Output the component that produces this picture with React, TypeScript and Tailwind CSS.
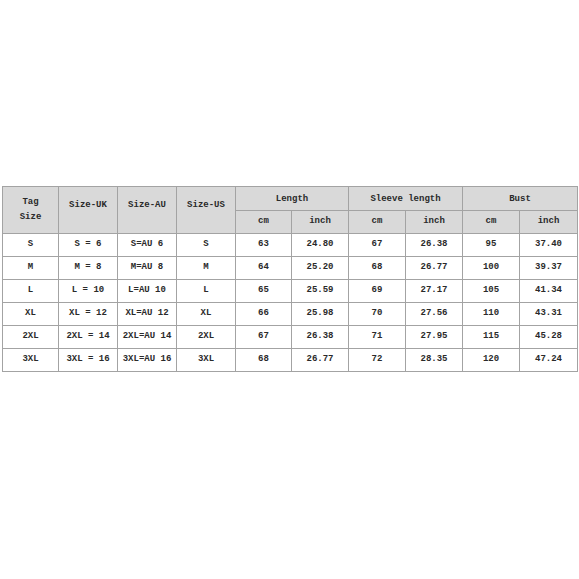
import React from "react";

const rows = [
  ["S", "S = 6", "S=AU 6", "S", "63", "24.80", "67", "26.38", "95", "37.40"],
  ["M", "M = 8", "M=AU 8", "M", "64", "25.20", "68", "26.77", "100", "39.37"],
  ["L", "L = 10", "L=AU 10", "L", "65", "25.59", "69", "27.17", "105", "41.34"],
  ["XL", "XL = 12", "XL=AU 12", "XL", "66", "25.98", "70", "27.56", "110", "43.31"],
  ["2XL", "2XL = 14", "2XL=AU 14", "2XL", "67", "26.38", "71", "27.95", "115", "45.28"],
  ["3XL", "3XL = 16", "3XL=AU 16", "3XL", "68", "26.77", "72", "28.35", "120", "47.24"],
];

const widths = [56, 59, 59, 59, 56, 57, 57, 57, 57, 58];

export default function App() {
  const cell = "border border-[#a3a3a3] text-center p-0";
  return (
    <div
      className="w-[579px] h-[579px] bg-white pt-[186px] pl-[2px] text-[#2a2a2a] font-bold text-[9px]"
      style={{ fontFamily: '"Liberation Mono", "DejaVu Sans Mono", monospace' }}
    >
      <table className="table-fixed border-collapse w-[575px]">
        <colgroup>
          {widths.map((w, i) => (
            <col key={i} style={{ width: w }} />
          ))}
        </colgroup>
        <thead>
          <tr className="h-[24px] bg-[#d9d9d9]">
            <td rowSpan={2} className={`${cell} leading-[15px]`}>
              Tag
              <br />
              Size
            </td>
            <td rowSpan={2} className={`${cell} align-top pt-[12px]`}>Size-UK</td>
            <td rowSpan={2} className={`${cell} align-top pt-[12px]`}>Size-AU</td>
            <td rowSpan={2} className={`${cell} align-top pt-[12px]`}>Size-US</td>
            <td colSpan={2} className={`${cell} pt-[2px]`}>Length</td>
            <td colSpan={2} className={`${cell} pt-[2px]`}>Sleeve length</td>
            <td colSpan={2} className={`${cell} pt-[2px]`}>Bust</td>
          </tr>
          <tr className="h-[23px] bg-[#d9d9d9]">
            <td className={cell}>cm</td>
            <td className={cell}>inch</td>
            <td className={cell}>cm</td>
            <td className={cell}>inch</td>
            <td className={cell}>cm</td>
            <td className={cell}>inch</td>
          </tr>
        </thead>
        <tbody>
          {rows.map((r, i) => (
            <tr key={i} className="h-[23px]">
              {r.map((c, j) => (
                <td key={j} className={cell}>
                  {c}
                </td>
              ))}
            </tr>
          ))}
        </tbody>
      </table>
    </div>
  );
}
